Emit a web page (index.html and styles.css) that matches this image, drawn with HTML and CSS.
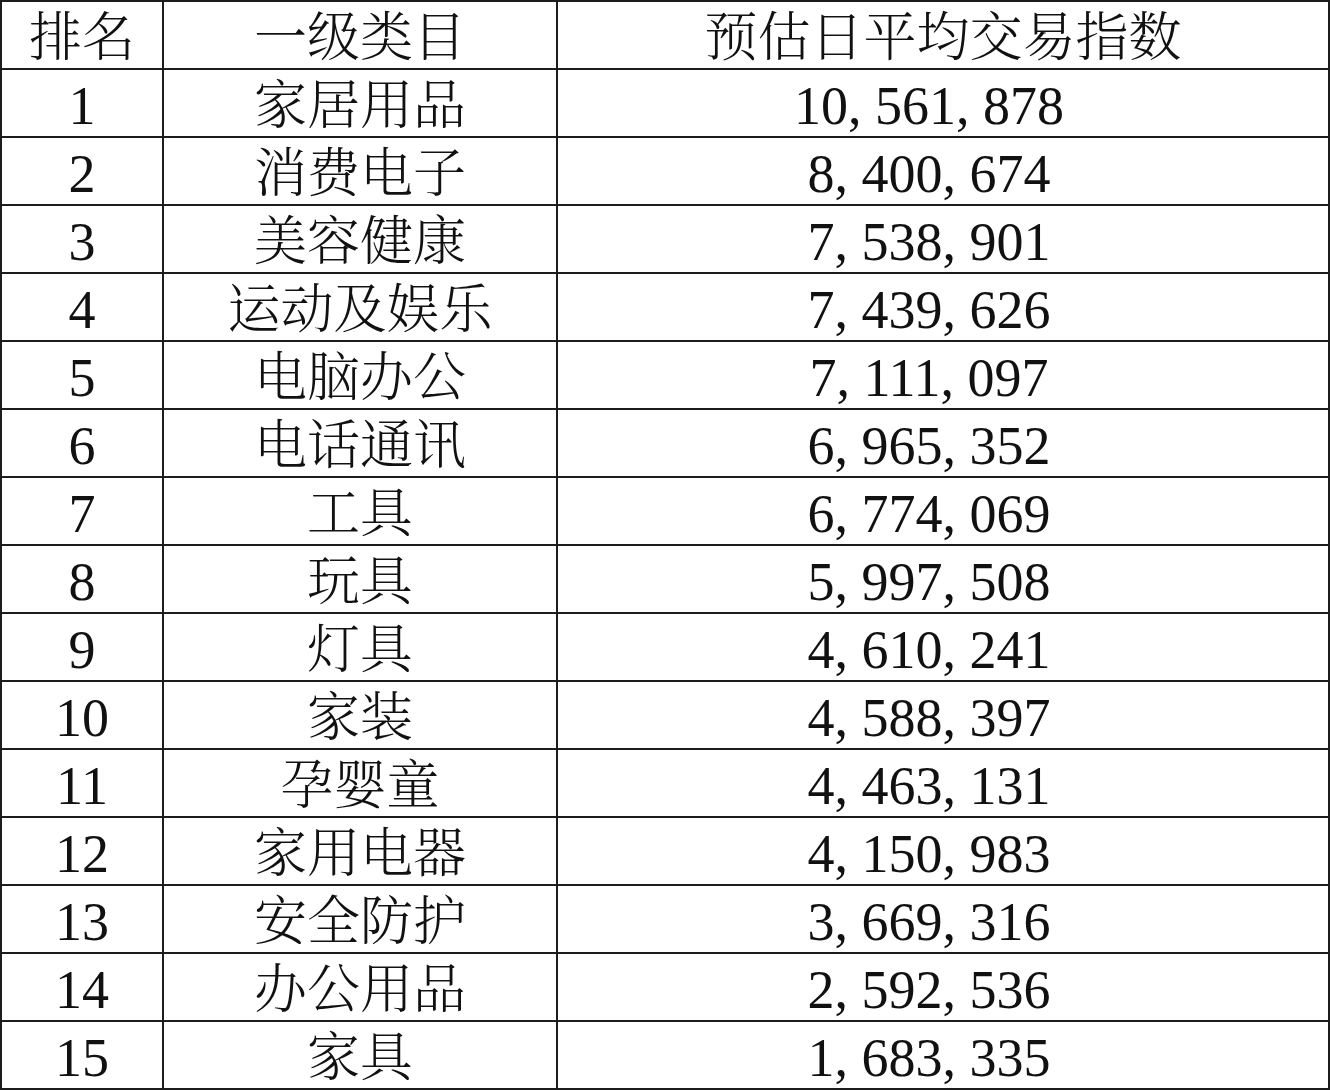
FILE: index.html
```html
<!DOCTYPE html>
<html lang="zh-CN">
<head>
<meta charset="utf-8">
<title>一级类目 预估日平均交易指数</title>
<link rel="stylesheet" href="styles.css">
</head>
<body>
<table class="rank-table">
  <colgroup>
    <col class="col-rank">
    <col class="col-cat">
    <col class="col-num">
  </colgroup>
  <thead>
    <tr><th>排名</th><th>一级类目</th><th>预估日平均交易指数</th></tr>
  </thead>
  <tbody>
    <tr><td>1</td><td>家居用品</td><td class="num">10<span class="c">,</span>561<span class="c">,</span>878</td></tr>
    <tr><td>2</td><td>消费电子</td><td class="num">8<span class="c">,</span>400<span class="c">,</span>674</td></tr>
    <tr><td>3</td><td>美容健康</td><td class="num">7<span class="c">,</span>538<span class="c">,</span>901</td></tr>
    <tr><td>4</td><td>运动及娱乐</td><td class="num">7<span class="c">,</span>439<span class="c">,</span>626</td></tr>
    <tr><td>5</td><td>电脑办公</td><td class="num">7<span class="c">,</span>111<span class="c">,</span>097</td></tr>
    <tr><td>6</td><td>电话通讯</td><td class="num">6<span class="c">,</span>965<span class="c">,</span>352</td></tr>
    <tr><td>7</td><td>工具</td><td class="num">6<span class="c">,</span>774<span class="c">,</span>069</td></tr>
    <tr><td>8</td><td>玩具</td><td class="num">5<span class="c">,</span>997<span class="c">,</span>508</td></tr>
    <tr><td>9</td><td>灯具</td><td class="num">4<span class="c">,</span>610<span class="c">,</span>241</td></tr>
    <tr><td>10</td><td>家装</td><td class="num">4<span class="c">,</span>588<span class="c">,</span>397</td></tr>
    <tr><td>11</td><td>孕婴童</td><td class="num">4<span class="c">,</span>463<span class="c">,</span>131</td></tr>
    <tr><td>12</td><td>家用电器</td><td class="num">4<span class="c">,</span>150<span class="c">,</span>983</td></tr>
    <tr><td>13</td><td>安全防护</td><td class="num">3<span class="c">,</span>669<span class="c">,</span>316</td></tr>
    <tr><td>14</td><td>办公用品</td><td class="num">2<span class="c">,</span>592<span class="c">,</span>536</td></tr>
    <tr><td>15</td><td>家具</td><td class="num">1<span class="c">,</span>683<span class="c">,</span>335</td></tr>
  </tbody>
</table>
</body>
</html>
```

FILE: styles.css
```css
html, body {
  margin: 0;
  padding: 0;
  background: #ffffff;
}

.rank-table {
  width: 1330px;
  table-layout: fixed;
  border-collapse: separate;
  border-spacing: 0;
  border-left: 2px solid #1c1c1c;
  border-top: 2px solid #1c1c1c;
  font-family: "Liberation Serif", "Noto Serif CJK SC", "Noto Sans CJK SC", serif;
  font-size: 53px;
  font-weight: 300;
  color: #111111;
}

.col-rank { width: 162px; }
.col-cat { width: 394px; }
.col-num { width: 772px; }

.rank-table th,
.rank-table td {
  box-sizing: border-box;
  height: 68px;
  padding: 6px 0 0 0;
  border-right: 2px solid #1c1c1c;
  border-bottom: 2px solid #1c1c1c;
  text-align: center;
  vertical-align: middle;
  font-weight: 300;
  line-height: 60px;
  white-space: nowrap;
  overflow: hidden;
}

.rank-table td:first-child {
  font-size: 54px;
}

.rank-table td.num {
  font-size: 54px;
  padding-right: 28px;
}

.c {
  letter-spacing: 0.25em;
}
```
